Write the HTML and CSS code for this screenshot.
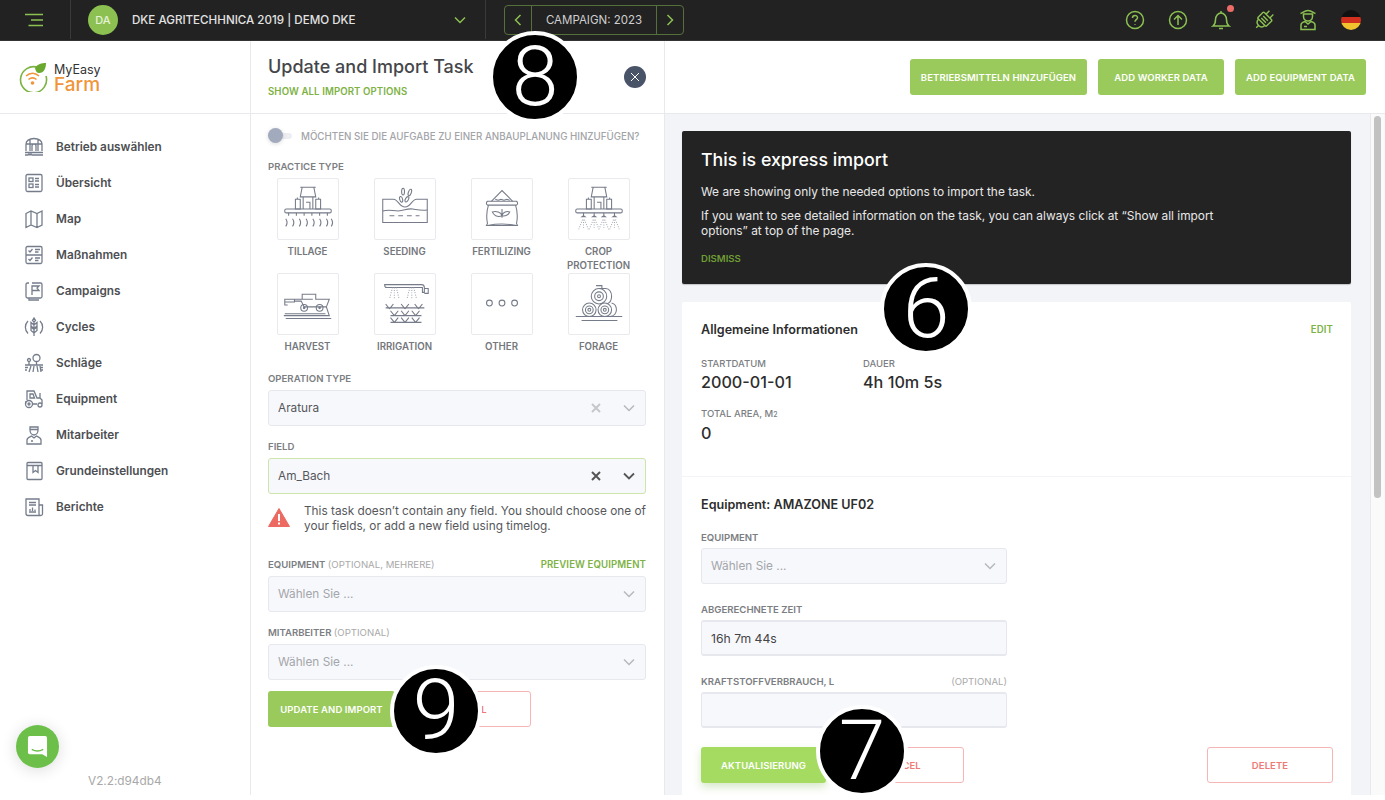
FILE: index.html
```html
<!DOCTYPE html>
<html lang="en">
<head>
    <meta charset="UTF-8">
    <meta name="viewport" content="width=device-width, initial-scale=1.0">
    <title>Update and Import Task</title>
    <link rel="stylesheet" href="styles.css">
</head>
<body>
<div class="app">
    <header class="topbar">
        <div class="burger-cell">
            <svg width="20" height="14" viewBox="0 0 20 14" fill="none" stroke="#8cc152" stroke-width="1.6"><path d="M1 1.5h18M7 7h12M4.500 12.500H19"/></svg>
        </div>
        <div class="farm-cell">
            <span class="avatar">DA</span>
            <span class="farm-name">DKE AGRITECHHNICA 2019 | DEMO DKE</span>
            <svg class="farm-chevron" width="12" height="8" viewBox="0 0 12 8" fill="none" stroke="#8cc152" stroke-width="1.5"><path d="M1 1.500l5 5 5-5"/></svg>
        </div>
        <div class="campaign">
            <span class="campaign-arrow"><svg width="8" height="12" viewBox="0 0 8 12" fill="none" stroke="#8cc152" stroke-width="1.5"><path d="M6.500 1l-5 5 5 5"/></svg></span>
            <span class="campaign-label">CAMPAIGN: 2023</span>
            <span class="campaign-arrow"><svg width="8" height="12" viewBox="0 0 8 12" fill="none" stroke="#8cc152" stroke-width="1.5"><path d="M1.500 1l5 5-5 5"/></svg></span>
        </div>
        <div class="top-icons">
            <svg width="20" height="20" viewBox="0 0 20 20" fill="none" stroke="#8cc152" stroke-width="1.500"><circle cx="10" cy="10" r="8.500"/><path d="M7.500 8c0-3.300 5-3.300 5-.3 0 2-2.500 2-2.500 4"/><path d="M10 14v.8"/></svg>
            <svg width="20" height="20" viewBox="0 0 20 20" fill="none" stroke="#8cc152" stroke-width="1.500"><circle cx="10" cy="10" r="8.500"/><path d="M10 15V5.500M6 9.500l4-4 4 4"/></svg>
            <span class="bell">
                <svg width="20" height="20" viewBox="0 0 20 20" fill="none" stroke="#8cc152" stroke-width="1.500"><path d="M2 16c2-1.500 2.500-3.500 2.500-6.500C4.500 6 7 3 10 3s5.500 3 5.500 6.500c0 3 .5 5 2.500 6.500z"/><path d="M10 1v2M8 18.500h4"/></svg>
                <span class="bell-dot"></span>
            </span>
            <svg class="plug-icon" width="22" height="22" viewBox="0 0 20 20" fill="none" stroke="#8cc152" stroke-width="1.300"><g transform="rotate(45 10 10)"><rect x="4.500" y="5" width="11" height="8" rx="1"/><path d="M7.500 5V.5M12.500 5V.5M6 13c0 3 1.500 4 4 4s4-1 4-4M10 17v3M7 8h6M7 10.500h6"/></g></svg>
            <svg width="20" height="22" viewBox="0 0 20 22" fill="none" stroke="#8cc152" stroke-width="1.500"><path d="M2.500 4.500c2-.5 4-3 7.500-3s5.500 2.500 7.500 3"/><path d="M5.500 5h9v2.500c0 2.500-2 4.500-4.500 4.500S5.500 10 5.500 7.500z"/><path d="M3 20.500v-4.500c0-2 2-3 4-3.500l3 2.500 3-2.500c2 .5 4 1.500 4 3.500v4.500z"/><path d="M6 17.500h3"/></svg>
            <span class="flag"></span>
        </div>
    </header>

    <div class="main">
        <aside class="sidebar">
            <div class="logo">
                <svg width="30" height="30" viewBox="0 0 30 30" fill="none">
                    <path d="M20 5.500A13 13 0 1 0 28 14" stroke="#7cb342" stroke-width="1.600"/>
                    <path d="M17 6c2-4 7-5 11-5 0 5-2 10-7 10-2 0-3.500-2-4-5z" fill="#6aa82f"/>
                    <path d="M8 14c4-3.500 9-3.500 13 0M10.500 17.500c2.500-2 5.500-2 8 0" stroke="#f0953a" stroke-width="1.600"/>
                    <circle cx="14.500" cy="21" r="1.800" fill="#f0953a"/>
                </svg>
                <div class="logo-text"><span class="logo-top">MyEasy</span><span class="logo-bottom">Farm</span></div>
            </div>
            <nav class="nav">
                <a class="nav-item">
                    <svg class="nav-icon" viewBox="0 0 20 20"><path d="M2 14V7c0-3 3-5.500 8-5.500s8 2.500 8 5.500v7M6 14V3M14 14V3M8 14V9c0-2.500 4-2.500 4 0v5M2 7h16M1 15.500h18M1 18h3l1-1 1 1 1-1 1 1h11"/></svg>
                    Betrieb auswählen
                </a>
                <a class="nav-item">
                    <svg class="nav-icon" viewBox="0 0 20 20"><rect x="2" y="1.500" width="16" height="17" rx="1.500"/><rect x="5" y="5" width="4" height="3.500"/><rect x="5" y="11" width="4" height="3.500"/><path d="M11 5.500h4M11 8h4M11 11.500h4M11 14h4"/></svg>
                    Übersicht
                </a>
                <a class="nav-item">
                    <svg class="nav-icon" viewBox="0 0 20 20"><path d="M2 4.500l5-2.500 6 2.500 5-2.500v14l-5 2.500-6-2.500-5 2.500zM7 2v14M13 4.500v14"/></svg>
                    Map
                </a>
                <a class="nav-item">
                    <svg class="nav-icon" viewBox="0 0 20 20"><rect x="2" y="1.500" width="16" height="17" rx="1.500"/><path d="M2 10h16M4.500 5.500l1.500 1.500 2.500-3M4.500 14l1.500 1.500 2.500-3M11 4.500h5M11 7h3.500M11 13h5M11 15.500h3.500"/></svg>
                    Maßnahmen
                </a>
                <a class="nav-item">
                    <svg class="nav-icon" viewBox="0 0 20 20"><path d="M5 2H3.500C2.500 2 2 2.500 2 3.500v12c0 1 .5 1.500 1.500 1.500H5M8 2h8.500c1 0 1.500.5 1.500 1.500v12c0 1-.5 1.500-1.500 1.500H5v2h10"/><path d="M8 14V5h7l-2 2 2 2.500H8"/></svg>
                    Campaigns
                </a>
                <a class="nav-item">
                    <svg class="nav-icon" viewBox="0 0 20 20"><path d="M10 4v15M10 8L7 5.500V9l3 2.500 3-2.500V5.500zM10 12.500l-3-2.500v3.500l3 2.500 3-2.500V10zM10 1l-1.500 2.500L10 5l1.500-1.500z"/><path d="M4 4c-3.500 3.500-3.500 9 0 12.500M16 4c3.500 3.500 3.500 9 0 12.500"/></svg>
                    Cycles
                </a>
                <a class="nav-item">
                    <svg class="nav-icon" viewBox="0 0 20 20"><circle cx="12.500" cy="5" r="3.500"/><circle cx="5" cy="7" r="1.500"/><path d="M12.500 8.500V12M5 8.500V12M1 12h18M1 14.500h3M16 14.500h3M1 17h2M17 17h2M7 13l-2 6M10 13l-1 6M13 13l1 6M16 13l1 6"/></svg>
                    Schläge
                </a>
                <a class="nav-item">
                    <svg class="nav-icon" viewBox="0 0 20 20"><path d="M3 11V2h7l3 7h3V4M6 5h3l1.500 4H6zM2 12l-.5 3M8 15h5M13 9l3 0 2 2v4"/><circle cx="5" cy="15" r="3.500"/><circle cx="5" cy="15" r="1"/><circle cx="16" cy="16" r="2"/></svg>
                    Equipment
                </a>
                <a class="nav-item">
                    <svg class="nav-icon" viewBox="0 0 20 20"><path d="M6 2h8v3c0 2.500-1.500 5-4 5S6 7.500 6 5zM6 4.500h8"/><path d="M3 19v-4c0-2.500 2-3 4.500-4L10 13l2.500-2c2.500 1 4.500 1.500 4.500 4v4zM7 16h2"/></svg>
                    Mitarbeiter
                </a>
                <a class="nav-item">
                    <svg class="nav-icon" viewBox="0 0 20 20"><rect x="3" y="1.500" width="15" height="17" rx="1"/><path d="M3 4.500h15M9 4.500v7l2.500-2 2.500 2v-7"/></svg>
                    Grundeinstellungen
                </a>
                <a class="nav-item">
                    <svg class="nav-icon" viewBox="0 0 20 20"><path d="M15 8h3.500v9c0 1-1 1.500-2 1.500s-1.500-.5-1.500-1.500V2H2v14.500c0 1 1 2 2 2h12.500"/><path d="M5 5.500h7M5 8h7M5 15h7M6 14v-2M8.500 14v-3.500M11 14v-1.500"/></svg>
                    Berichte
                </a>
            </nav>
            <div class="version">V2.2:d94db4</div>
        </aside>

        <section class="import-panel">
            <div class="panel-head">
                <div>
                    <h1>Update and Import Task</h1>
                    <a class="link-green">SHOW ALL IMPORT OPTIONS</a>
                </div>
                <span class="close-btn"><svg width="10" height="10" viewBox="0 0 10 10" fill="none" stroke="#fff" stroke-width="1"><path d="M1 1l8 8M9 1l-8 8"/></svg></span>
            </div>
            <div class="panel-body">
                <div class="toggle-row">
                    <span class="toggle"><span class="toggle-knob"></span></span>
                    MÖCHTEN SIE DIE AUFGABE ZU EINER ANBAUPLANUNG HINZUFÜGEN?
                </div>
                <div class="field-label practice-label">PRACTICE TYPE</div>
                <div class="practice-grid">
                    <div class="practice">
                        <div class="tile"><svg viewBox="0 0 62 62">
                            <path d="M23 8.500h16M25 8.500l-2 10h16l-2-10M26 18.500V31M36 18.500V31M29 24h4v7M18 21h5v10h-5zM39 21h5v10h-5zM20 21v-2M42 21v-2"/>
                            <rect x="7" y="31" width="48" height="4" rx="1.500"/>
                            <path d="M11 35v3M19 35v3M27 35v3M35 35v3M43 35v3M51 35v3"/>
                            <path d="M8 41c2 3 2 5 0 8M15 41c2 3 2 5 0 8M22 41c2 3 2 5 0 8M29 41c2 3 2 5 0 8M36 41c2 3 2 5 0 8M43 41c2 3 2 5 0 8M50 41c2 3 2 5 0 8M55 41c2 3 2 5 0 8"/>
                        </svg></div>
                        <span>TILLAGE</span>
                    </div>
                    <div class="practice">
                        <div class="tile"><svg viewBox="0 0 62 62">
                            <path d="M8 21h11c5 0 6 8 12 8s7-8 12-8h11v24H8z"/>
                            <path d="M8 33c7-2 10 0 16 0s9-3 15-2 9 2 15 1M15 38h5M24 38h5M33 38h5M42 38h4"/>
                            <ellipse cx="29" cy="13" rx="1.500" ry="3.500"/><ellipse cx="36" cy="14" rx="1.500" ry="3.500" transform="rotate(20 36 14)"/><ellipse cx="27" cy="21" rx="1.500" ry="3" transform="rotate(-15 27 21)"/><ellipse cx="33" cy="21" rx="1.500" ry="3" transform="rotate(30 33 21)"/>
                        </svg></div>
                        <span>SEEDING</span>
                    </div>
                    <div class="practice">
                        <div class="tile"><svg viewBox="0 0 62 62">
                            <path d="M20 23l11-11 11 11M24 21l3 1 3-1 3 1 3-1 3 1"/>
                            <path d="M16 23h30c1.500 1 1.500 3 0 4H16c-1.500-1-1.500-3 0-4z"/>
                            <path d="M17 27c-2 6-2 14-1 19l-1 2h32l-1-2c1-5 1-13-1-19M16 48c10-2 20-2 30 0"/>
                            <path d="M31 31v9M31 38c-5 2-9-1-10-4 4-1 9 0 10 4zM31 38c3 1 7-1 8-4-3-1-7 0-8 4z"/>
                        </svg></div>
                        <span>FERTILIZING</span>
                    </div>
                    <div class="practice">
                        <div class="tile"><svg viewBox="0 0 62 62">
                            <path d="M23 8.500h16M25 8.500l-2 10h16l-2-10M26 18.500V31M36 18.500V31M29 24h4v7M18 21h5v10h-5zM39 21h5v10h-5zM20 21v-2M42 21v-2"/>
                            <rect x="7" y="31" width="48" height="4" rx="1.500"/>
                            <path d="M15 35v3l-1.500 1h3l-1.500-1M26 35v3l-1.500 1h3l-1.500-1M36 35v3l-1.500 1h3l-1.500-1M47 35v3l-1.500 1h3l-1.500-1"/>
                            <path class="dots" d="M14 42l-4 10M15 42v10M16 42l4 10M25 42l-4 10M26 42v10M27 42l4 10M35 42l-4 10M36 42v10M37 42l4 10M46 42l-4 10M47 42v10M48 42l4 10"/>
                        </svg></div>
                        <span>CROP PROTECTION</span>
                    </div>
                    <div class="practice">
                        <div class="tile"><svg viewBox="0 0 62 62">
                            <path d="M7 29h10v-3l-10 0v6h3M17 26h8v-5h14v5h14l-3 8 3 9H6M24 26h12M17 28l7 0 3 6h23"/>
                            <circle cx="27" cy="35" r="3.500"/><circle cx="43" cy="35" r="3.500"/><circle cx="27" cy="35" r=".8"/><circle cx="43" cy="35" r=".8"/>
                            <path d="M7 41h42M8 46h47"/>
                        </svg></div>
                        <span>HARVEST</span>
                    </div>
                    <div class="practice">
                        <div class="tile"><svg viewBox="0 0 62 62">
                            <path d="M10 11h38c2 0 3 1 3 3v5h-2v-5H12c-2 0-2-3-2-3zM51 15h4v5h-4"/>
                            <path class="dots" d="M18 14l-3 12M20 14v12M22 14l3 12M36 14l-3 12M38 14v12M40 14l3 12"/>
                            <path d="M11 35h40M15 36l-4-5M15 36l4-5M31 36l-4-5M31 36l4-5M45 36l-4-5M45 36l4-5M16 43h32M20 43l-4-5M20 43l4-5M31 43l-4-5M31 43l4-5M42 43l-4-5M42 43l4-5M16 50h32M20 50l-4-5M20 50l4-5M31 50l-4-5M31 50l4-5M42 50l-4-5M42 50l4-5"/>
                        </svg></div>
                        <span>IRRIGATION</span>
                    </div>
                    <div class="practice">
                        <div class="tile"><svg viewBox="0 0 62 62"><circle cx="18" cy="30" r="3"/><circle cx="31" cy="30" r="3"/><circle cx="44" cy="30" r="3"/></svg></div>
                        <span>OTHER</span>
                    </div>
                    <div class="practice">
                        <div class="tile"><svg viewBox="0 0 62 62">
                            <circle cx="31" cy="23" r="8"/><circle cx="31" cy="23" r="4.500"/><circle cx="31" cy="23" r="1.500"/>
                            <circle cx="21" cy="37" r="7"/><circle cx="21" cy="37" r="4"/><circle cx="21" cy="37" r="1.500"/>
                            <circle cx="37" cy="37" r="7"/><circle cx="37" cy="37" r="4"/><circle cx="37" cy="37" r="1.500"/>
                            <path d="M31 15h7c4 0 6 4 6 8s-2 7-5 8M44 30c4 1 5 4 5 7s-2 7-7 7M28 12h6v3M7 44h48M13 48h37"/>
                        </svg></div>
                        <span>FORAGE</span>
                    </div>
                </div>

                <div class="field-label">OPERATION TYPE</div>
                <div class="select">
                    <span class="select-value">Aratura</span>
                    <svg class="select-x" width="10" height="10" viewBox="0 0 10 10" fill="none" stroke="#c4c7cc" stroke-width="2"><path d="M1 1l8 8M9 1l-8 8"/></svg>
                    <svg width="12" height="8" viewBox="0 0 12 8" fill="none" stroke="#b4b8be" stroke-width="1.500"><path d="M1 1.500l5 5 5-5"/></svg>
                </div>

                <div class="field-label">FIELD</div>
                <div class="select select-active">
                    <span class="select-value">Am_Bach</span>
                    <svg class="select-x" width="10" height="10" viewBox="0 0 10 10" fill="none" stroke="#555" stroke-width="2"><path d="M1 1l8 8M9 1l-8 8"/></svg>
                    <svg width="12" height="8" viewBox="0 0 12 8" fill="none" stroke="#555" stroke-width="1.800"><path d="M1 1.500l5 5 5-5"/></svg>
                </div>

                <div class="warning">
                    <svg width="22" height="19" viewBox="0 0 22 19"><path d="M11 0.500L21.500 18.500H.5z" fill="#ec6a62" stroke="#ec6a62" stroke-linejoin="round"/><path d="M11 6v7M11 14.500v2" stroke="#fff" stroke-width="2"/></svg>
                    <p>This task doesn’t contain any field. You should choose one of your fields, or add a new field using timelog.</p>
                </div>

                <div class="field-label label-split"><span>EQUIPMENT <em>(OPTIONAL, MEHRERE)</em></span><a class="link-green">PREVIEW EQUIPMENT</a></div>
                <div class="select">
                    <span class="select-placeholder">Wählen Sie ...</span>
                    <svg width="12" height="8" viewBox="0 0 12 8" fill="none" stroke="#b4b8be" stroke-width="1.500"><path d="M1 1.500l5 5 5-5"/></svg>
                </div>

                <div class="field-label">MITARBEITER <em>(OPTIONAL)</em></div>
                <div class="select">
                    <span class="select-placeholder">Wählen Sie ...</span>
                    <svg width="12" height="8" viewBox="0 0 12 8" fill="none" stroke="#b4b8be" stroke-width="1.500"><path d="M1 1.500l5 5 5-5"/></svg>
                </div>

                <div class="form-actions">
                    <button class="btn btn-green btn-update">UPDATE AND IMPORT</button>
                    <button class="btn btn-outline btn-cancel-left">CANCEL</button>
                </div>
            </div>
        </section>

        <section class="details">
            <div class="details-head">
                <button class="btn btn-green">BETRIEBSMITTELN HINZUFÜGEN</button>
                <button class="btn btn-green">ADD WORKER DATA</button>
                <button class="btn btn-green">ADD EQUIPMENT DATA</button>
            </div>
            <div class="details-scroll">
                <div class="details-body">
                    <div class="express">
                        <h2>This is express import</h2>
                        <p>We are showing only the needed options to import the task.</p>
                        <p>If you want to see detailed information on the task, you can always click at “Show all import options” at top of the page.</p>
                        <a class="dismiss">DISMISS</a>
                    </div>
                    <div class="card card-info">
                        <div class="card-title-row"><h3>Allgemeine Informationen</h3><a class="link-green">EDIT</a></div>
                        <div class="stat-row">
                            <div class="stat stat-date"><label>STARTDATUM</label><strong>2000-01-01</strong></div>
                            <div class="stat"><label>DAUER</label><strong>4h 10m 5s</strong></div>
                        </div>
                        <div class="stat"><label>TOTAL AREA, M<small>2</small></label><strong>0</strong></div>
                    </div>
                    <div class="card card-equipment">
                        <h3>Equipment: AMAZONE UF02</h3>
                        <div class="narrow">
                            <div class="field-label">EQUIPMENT</div>
                            <div class="select">
                                <span class="select-placeholder">Wählen Sie ...</span>
                                <svg width="12" height="8" viewBox="0 0 12 8" fill="none" stroke="#b4b8be" stroke-width="1.500"><path d="M1 1.500l5 5 5-5"/></svg>
                            </div>
                            <div class="field-label">ABGERECHNETE ZEIT</div>
                            <div class="input">16h 7m 44s</div>
                            <div class="field-label label-split"><span>KRAFTSTOFFVERBRAUCH, L</span><em>(OPTIONAL)</em></div>
                            <div class="input"></div>
                        </div>
                        <div class="card-actions">
                            <button class="btn btn-light">AKTUALISIERUNG</button>
                            <button class="btn btn-outline btn-cancel-right">CANCEL</button>
                            <button class="btn btn-outline btn-delete">DELETE</button>
                        </div>
                    </div>
                </div>
                <div class="scrollbar"><span class="scroll-thumb"></span></div>
            </div>
        </section>
    </div>

    <span class="chat-btn">
        <svg viewBox="0 0 22 24"><path d="M3 1h16c1.200 0 2 .8 2 2v20l-5-3H3c-1.200 0-2-.8-2-2V3c0-1.200.8-2 2-2z" fill="#fff"/><path d="M5 15c3.500 2 8.500 2 12 0" fill="none" stroke="#6cc04a" stroke-width="1.500"/></svg>
    </span>

    <span class="step step-8">8</span>
    <span class="step step-6">6</span>
    <span class="step step-9">9</span>
    <span class="step step-7">7</span>
</div>
</body>
</html>
```

FILE: styles.css
```css
* {
    box-sizing: border-box;
}
body {
    margin: 0;
    background: #fff;
    font-family: Inter, "Liberation Sans", sans-serif;
    color: #4a4a4a;
}
h1, h2, h3, p {
    margin: 0;
}
em {
    font-style: normal;
    font-weight: 400;
    color: #a9a9a9;
}
.app {
    position: relative;
    height: 795px;
    overflow: hidden;
    display: flex;
    flex-direction: column;
}

/* top bar */
.topbar {
    height: 41px;
    flex: none;
    display: flex;
    align-items: center;
    background: #222;
    padding-bottom: 2px;
    box-shadow: inset 0 -1px 0 #333;
}
.burger-cell {
    width: 71px;
    height: 39px;
    padding-left: 24px;
    display: flex;
    align-items: center;
    border-right: 1px solid #3a3a3a;
}
.farm-cell {
    width: 415px;
    height: 39px;
    padding-left: 17px;
    display: flex;
    align-items: center;
    border-right: 1px solid #3a3a3a;
}
.avatar {
    width: 30px;
    height: 30px;
    border-radius: 50%;
    background: #8cc152;
    color: #e6f2d8;
    font-size: 11px;
    font-weight: 500;
    display: flex;
    align-items: center;
    justify-content: center;
}
.farm-name {
    margin-left: 14px;
    font-size: 11.600px;
    font-weight: 500;
    color: #e2e2e2;
    white-space: nowrap;
}
.farm-chevron {
    margin-left: auto;
    margin-right: 19px;
}
.campaign {
    width: 180px;
    height: 30px;
    margin-left: 18px;
    display: flex;
    border: 1px solid #55703a;
    border-radius: 4px;
    color: #cfcfcf;
}
.campaign-arrow {
    width: 26px;
    flex: none;
    display: flex;
    align-items: center;
    justify-content: center;
}
.campaign-label {
    flex: 1;
    display: flex;
    align-items: center;
    justify-content: center;
    font-size: 11.500px;
    border-left: 1px solid #55703a;
    border-right: 1px solid #55703a;
}
.top-icons {
    margin-left: auto;
    margin-right: 24px;
    display: flex;
    align-items: center;
    gap: 23.300px;
}
.plug-icon {
    margin: 0 -1px;
}
.bell {
    position: relative;
    display: flex;
}
.bell-dot {
    position: absolute;
    top: -5px;
    right: -3px;
    width: 7px;
    height: 7px;
    border-radius: 50%;
    background: #ee6c67;
}
.flag {
    width: 20px;
    height: 20px;
    border-radius: 50%;
    background: linear-gradient(#111 0 34%, #d32f1e 34% 67%, #f2c12e 67%);
}

.main {
    flex: 1;
    display: flex;
    min-height: 0;
}

/* sidebar */
.sidebar {
    width: 251px;
    flex: none;
    display: flex;
    flex-direction: column;
    border-right: 1px solid #e8e9ec;
}
.logo {
    height: 73px;
    flex: none;
    padding-left: 18px;
    display: flex;
    align-items: center;
    gap: 6px;
    border-bottom: 1px solid #e8e9ec;
}
.logo-text {
    display: flex;
    flex-direction: column;
    line-height: 1;
    margin-top: 4px;
}
.logo-top {
    font-size: 12.500px;
    color: #333;
}
.logo-bottom {
    margin-top: -2px;
    font-size: 19px;
    font-weight: 500;
    color: #f0953a;
}
.nav {
    padding-top: 15px;
}
.nav-item {
    height: 36px;
    padding-left: 24px;
    display: flex;
    align-items: center;
    gap: 12px;
    font-size: 11.800px;
    font-weight: 600;
    color: #4d4f53;
}
.nav-icon {
    width: 20px;
    height: 20px;
    fill: none;
    stroke: #757d8c;
    stroke-width: 1.300;
}
.version {
    margin-top: auto;
    padding: 0 0 7px 88px;
    font-size: 11.800px;
    color: #a8a8a8;
}

/* import panel */
.import-panel {
    width: 414px;
    flex: none;
    border-right: 1px solid #e8e9ec;
}
.panel-head {
    height: 73px;
    padding: 14px 18px 0 17px;
    display: flex;
    justify-content: space-between;
    border-bottom: 1px solid #e8e9ec;
}
.panel-head h1 {
    font-size: 18px;
    font-weight: 500;
    line-height: 24px;
    color: #44464a;
    margin-bottom: 7px;
}
.link-green {
    font-size: 9.650px;
    font-weight: 600;
    color: #7eb244;
    display: block;
    line-height: 12px;
    letter-spacing: .1px;
}
.close-btn {
    width: 22px;
    height: 22px;
    margin-top: 11px;
    border-radius: 50%;
    background: #4a5468;
    display: flex;
    align-items: center;
    justify-content: center;
}
.panel-body {
    padding: 14px 18px 0 17px;
}
.toggle-row {
    height: 16px;
    display: flex;
    align-items: center;
    gap: 9px;
    font-size: 9.750px;
    font-weight: 500;
    color: #a2a4a8;
    white-space: nowrap;
}
.toggle {
    position: relative;
    width: 24px;
    height: 6px;
    border-radius: 3px;
    background: #eceef2;
}
.toggle-knob {
    position: absolute;
    left: 0;
    top: -5px;
    width: 15px;
    height: 15px;
    border-radius: 50%;
    background: #a2aabd;
    box-shadow: 0 1px 4px rgba(0, 0, 0, .15);
}
.field-label {
    font-size: 9.600px;
    font-weight: 600;
    line-height: 12px;
    color: #7c7e82;
    margin: 15px 0 5px;
}
.practice-label {
    margin: 17px 0 5px;
}
.label-split {
    display: flex;
    justify-content: space-between;
}
.practice-grid {
    width: 388px;
    margin: 0 0 -10px -9px;
    display: grid;
    grid-template-columns: repeat(4, 97px);
    grid-auto-rows: 95px;
}
.practice {
    display: flex;
    flex-direction: column;
    align-items: center;
    text-align: center;
    font-size: 9.700px;
    font-weight: 600;
    color: #75777c;
    line-height: 14px;
}
.tile {
    width: 62px;
    height: 62px;
    flex: none;
    margin-bottom: 5px;
    border: 1px solid #e9eaee;
    border-radius: 2px;
}
.practice span {
    width: 72px;
}
.tile svg {
    display: block;
    width: 60px;
    height: 60px;
    fill: none;
    stroke: #757b88;
    stroke-width: 1.100;
}
.tile .dots {
    stroke-dasharray: 1 1.500;
    stroke: #a5a9b2;
}
.select, .input {
    height: 36px;
    padding: 0 10px 0 9px;
    display: flex;
    align-items: center;
    background: #f7f8fc;
    border: 1px solid #e6e8ed;
    border-radius: 3px;
    font-size: 11.800px;
}
.select-active {
    border-color: #cde4ab;
}
.select-value, .select-placeholder {
    flex: 1;
}
.select-value {
    color: #55575b;
}
.select-placeholder {
    color: #a4a6aa;
}
.select-x {
    margin-right: 22px;
}
.warning {
    margin: 10px 0 0;
    display: flex;
    gap: 14px;
}
.warning svg {
    flex: none;
    margin-top: 4px;
}
.warning p {
    font-size: 11.800px;
    line-height: 15px;
    color: #55575b;
}
.warning + .field-label {
    margin-top: 25px;
}
.form-actions {
    margin-top: 11px;
    display: flex;
    gap: 8px;
}
.btn {
    height: 36px;
    border: none;
    border-radius: 3px;
    font-family: inherit;
    font-size: 9.500px;
    font-weight: 600;
    color: #fff;
    padding: 0;
    letter-spacing: .1px;
    white-space: nowrap;
}
.btn-green {
    background: #9aca5b;
}
.btn-update {
    width: 127px;
}
.btn-outline {
    background: #fff;
    border: 1px solid #f6b5b2;
    color: #ee7a75;
}
.btn-cancel-left {
    width: 128px;
}

/* right side */
.details {
    flex: 1;
    min-width: 0;
    display: flex;
    flex-direction: column;
}
.details-head {
    height: 73px;
    flex: none;
    padding: 18px 19px 0 0;
    display: flex;
    justify-content: flex-end;
    gap: 11px;
    border-bottom: 1px solid #e8e9ec;
}
.details-head .btn:nth-child(1) { width: 177px; }
.details-head .btn:nth-child(2) { width: 126px; }
.details-head .btn:nth-child(3) { width: 131px; }
.details-scroll {
    flex: 1;
    min-height: 0;
    display: flex;
    background: #f2f4f8;
}
.details-body {
    flex: 1;
    padding: 17px 19px 0 17px;
}
.express {
    height: 153px;
    padding: 18px 19px 0;
    background: #232323;
    color: #e8e8e8;
    border-radius: 2px;
    box-shadow: 0 1px 1px rgba(0, 0, 0, .2);
}
.express h2 {
    font-size: 17.800px;
    font-weight: 500;
    line-height: 22px;
    color: #fff;
    margin-bottom: 14px;
}
.express p {
    font-size: 11.900px;
    line-height: 14.500px;
    max-width: 530px;
    margin-bottom: 9.500px;
}
.dismiss {
    display: block;
    margin-top: 15px;
    font-size: 9.600px;
    font-weight: 600;
    color: #6f9e35;
}
.card {
    background: #fff;
    padding: 0 18px 0 19px;
}
.card h3 {
    font-size: 12.600px;
    font-weight: 600;
    line-height: 16px;
    color: #2d2d2d;
}
.card-info {
    height: 174px;
    margin-top: 18px;
    padding-top: 20px;
    border-radius: 2px 2px 0 0;
}
.card-title-row {
    display: flex;
    justify-content: space-between;
    align-items: center;
    margin-bottom: 20px;
}
.stat-row {
    display: flex;
    margin-bottom: 16px;
}
.stat-date {
    width: 162px;
}
.stat label {
    display: block;
    font-size: 9.500px;
    font-weight: 500;
    line-height: 12px;
    color: #7c7e82;
    margin-bottom: 2px;
}
.stat small {
    font-size: 7px;
}
.stat strong {
    display: block;
    font-size: 16.200px;
    font-weight: 500;
    line-height: 20px;
    color: #2d2d2d;
}
.card-equipment {
    margin-top: 1px;
    height: 330px;
    padding-top: 20px;
}
.narrow {
    width: 306px;
    margin-top: 19px;
}
.narrow .field-label {
    margin: 20px 0 4px;
}
.narrow .field-label:first-child {
    margin-top: 0;
}
.input {
    color: #444;
    font-size: 12.200px;
    border-top-width: 2px;
    border-bottom-width: 2px;
}
.card-actions {
    margin-top: 19px;
    display: flex;
    gap: 12px;
}
.btn-light {
    width: 125px;
    background: #a6db62;
    box-shadow: 0 4px 8px rgba(120, 180, 70, .3);
}
.btn-cancel-right {
    width: 126px;
}
.btn-delete {
    width: 126px;
    margin-left: auto;
}
.scrollbar {
    width: 15px;
    flex: none;
    padding: 2px 4px 0 3px;
    background: #fafafa;
    border-left: 1px solid #e8e9ec;
}
.scroll-thumb {
    display: block;
    height: 382px;
    border-radius: 4px;
    background: #c2c2c2;
}

/* overlays */
.chat-btn {
    position: absolute;
    left: 16px;
    top: 725px;
    width: 43px;
    height: 43px;
    border-radius: 50%;
    background: #6cc04a;
    display: flex;
    align-items: center;
    justify-content: center;
    box-shadow: 0 2px 16px rgba(0, 0, 0, .14);
}
.chat-btn svg {
    width: 21px;
    height: 23px;
}
.step {
    position: absolute;
    width: 92px;
    height: 92px;
    border-radius: 50%;
    background: #000;
    border: 4px solid #fff;
    color: #fff;
    font-family: Roboto, sans-serif;
    font-size: 84px;
    font-weight: 300;
    line-height: 84px;
    text-align: center;
}
.step-8 { left: 489px; top: 31px; }
.step-6 { left: 880px; top: 263px; }
.step-9 { left: 390px; top: 665px; }
.step-7 { left: 816px; top: 705px; }
```
